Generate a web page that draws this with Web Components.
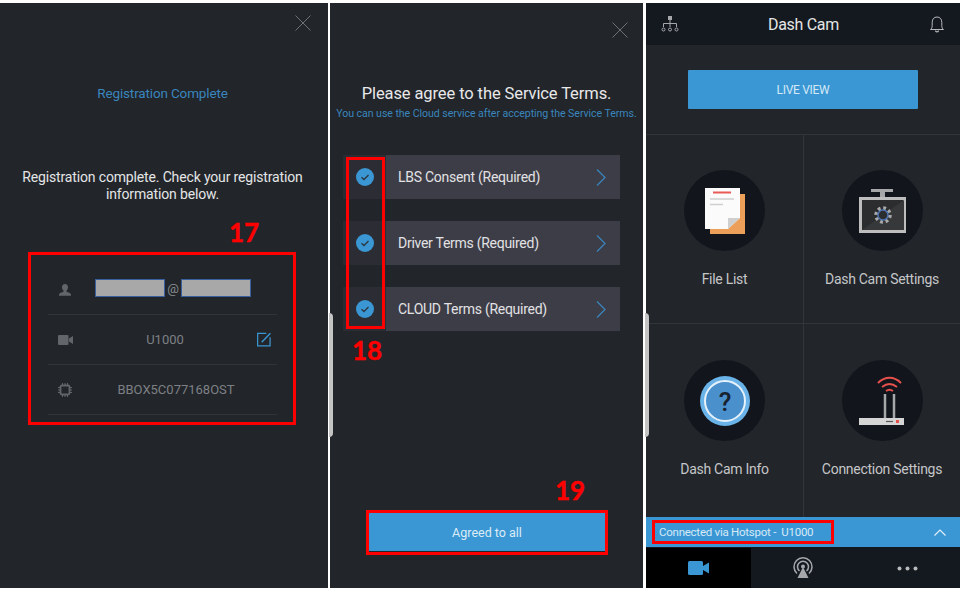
<!DOCTYPE html>
<html>
<head>
<meta charset="utf-8">
<title>Dash Cam</title>
<style>
  html, body { margin: 0; background: #fff; }
  body { width: 963px; height: 591px; overflow: hidden; position: relative; font-family: Roboto, "Liberation Sans", sans-serif; }
  .screens { display: flex; padding-top: 3px; height: 585px; }
  reg-screen { margin-right: 2px; }
  terms-screen { margin-right: 3px; }
</style>
</head>
<body>
<div class="screens">
  <reg-screen></reg-screen>
  <terms-screen></terms-screen>
  <dash-screen></dash-screen>
</div>
<mark-box style="left:28px;top:252px;width:268px;height:173px"></mark-box>
<mark-box style="left:346px;top:157px;width:39px;height:172px"></mark-box>
<mark-box style="left:366px;top:510px;width:242px;height:45px"></mark-box>
<mark-box style="left:652px;top:520px;width:182px;height:24px"></mark-box>
<mark-num style="left:229px;top:216px">17</mark-num>
<mark-num style="left:352px;top:334px">18</mark-num>
<mark-num style="left:555px;top:474px">19</mark-num>
<side-grip style="left:329px"></side-grip>
<side-grip style="left:645px"></side-grip>

<script>
const CLOSE_ICON = /* html */ `<svg width="16" height="16" viewBox="0 0 16 16"><path d="M.5.5l15 15M15.500.5l-15 15" stroke="#6d7074" fill="none"/></svg>`;

class MarkBox extends HTMLElement {
  constructor() {
    super();
    this.attachShadow({ mode: 'open' }).innerHTML = /* html */ `
    <style>:host { display: block; position: absolute; box-sizing: border-box; border: 3px solid #f00; }</style>`;
  }
}

class MarkNum extends HTMLElement {
  constructor() {
    super();
    this.attachShadow({ mode: 'open' }).innerHTML = /* html */ `
    <style>:host { display: block; position: absolute; font: 700 26px/32px Lato, sans-serif; color: #f00; -webkit-text-stroke: .4px #f00; }</style>
    <slot></slot>`;
  }
}

class SideGrip extends HTMLElement {
  constructor() {
    super();
    this.attachShadow({ mode: 'open' }).innerHTML = /* html */ `
    <style>:host { display: block; position: absolute; top: 313px; width: 4px; height: 124px; background: #c4c4c4; border-radius: 0 4px 4px 0; }</style>`;
  }
}

class InfoRow extends HTMLElement {
  constructor() {
    super();
    this.attachShadow({ mode: 'open' }).innerHTML = /* html */ `
    <style>
      :host { display: flex; align-items: center; height: 49px; border-bottom: 1px solid #31343a; position: relative; color: #7d8084; font-size: 13px; }
      .ico { position: absolute; left: 10px; display: flex; }
      .txt { flex: 1; display: flex; justify-content: center; align-items: center; padding-left: 5px; }
      .act { position: absolute; right: 6px; display: flex; }
    </style>
    <span class="ico"><slot name="icon"></slot></span>
    <span class="txt"><slot></slot></span>
    <span class="act"><slot name="action"></slot></span>`;
  }
}

class RegScreen extends HTMLElement {
  constructor() {
    super();
    this.attachShadow({ mode: 'open' }).innerHTML = /* html */ `
    <style>
      :host { display: flex; flex-direction: column; width: 328px; height: 585px; background: #22252a; box-sizing: border-box; position: relative; }
      .close { position: absolute; top: 12px; right: 17px; display: flex; }
      .title { margin-top: 82px; text-align: center; color: #3a86bd; font-size: 13.500px; letter-spacing: -.15px; line-height: 17px; padding-right: 3px; }
      .msg { margin-top: 67px; text-align: center; color: #e4e5e6; font-size: 14px; letter-spacing: -.15px; line-height: 17px; padding-right: 3px; }
      .list { margin: 62px 51px 0 48px; }
      .mask { display: inline-block; box-sizing: border-box; width: 70px; height: 18px; background: #a8a8a8; border: 1px solid #3a5f9e; }
      .at { padding: 0 2px; }
      .email { display: flex; align-items: center; margin: -3px 0 0 16px; color: #8a8d90; font-size: 13px; }
      .serial { margin-left: 22px; }
    </style>
    <div class="close">${CLOSE_ICON}</div>
    <div class="title">Registration Complete</div>
    <div class="msg">Registration complete. Check your registration<br>information below.</div>
    <div class="list">
      <info-row>
        <svg slot="icon" width="14" height="14" viewBox="0 0 14 14"><path d="M7 1c1.900 0 3 1.400 3 3.300 0 1.500-.7 2.700-1.500 3.300v1.100c1.700.5 4.500 1.300 4.500 3.100v1H1v-1c0-1.800 2.800-2.600 4.500-3.100V7.600C4.700 7 4 5.800 4 4.300 4 2.400 5.100 1 7 1z" fill="#62656a"/></svg>
        <span class="email"><span class="mask"></span><span class="at">@</span><span class="mask"></span></span>
      </info-row>
      <info-row>
        <svg slot="icon" width="15" height="12" viewBox="0 0 15 12"><path d="M1 1h8.500a1 1 0 0 1 1 1v8a1 1 0 0 1-1 1H1a1 1 0 0 1-1-1V2a1 1 0 0 1 1-1zM11 4.500L15 2v8l-4-2.500z" fill="#62656a"/></svg>
        U1000
        <svg slot="action" width="14" height="15" viewBox="0 0 15 15" fill="none" stroke="#3a97d4" stroke-width="1.300"><path d="M10 1H.7v13.300H14V5"/><path d="M5 10.500L14.300.7" stroke-width="1.500"/></svg>
      </info-row>
      <info-row>
        <svg slot="icon" width="14" height="14" viewBox="0 0 14 14"><rect x="2.500" y="2.500" width="9" height="9" rx="1.500" fill="none" stroke="#62656a" stroke-width="1.800"/><path d="M4.500 0v2M7 0v2M9.500 0v2M4.500 12v2M7 12v2M9.500 12v2M0 4.500h2M0 7h2M0 9.500h2M12 4.500h2M12 7h2M12 9.500h2" stroke="#62656a"/></svg>
        <span class="serial">BBOX5C077168OST</span>
      </info-row>
    </div>`;
  }
}

class TermsRow extends HTMLElement {
  constructor() {
    super();
    this.attachShadow({ mode: 'open' }).innerHTML = /* html */ `
    <style>
      :host { display: flex; align-items: stretch; height: 44px; background: #3d3d47; color: #e2e2e4; font-size: 14px; letter-spacing: -.27px; }
      .chk { width: 43px; background: #2c2d34; display: flex; align-items: center; justify-content: center; }
      .lbl { flex: 1; display: flex; align-items: center; padding-left: 12px; }
      .arr { display: flex; align-items: center; padding-right: 14px; }
    </style>
    <div class="chk"><svg width="18" height="18" viewBox="0 0 18 18"><circle cx="9" cy="9" r="9" fill="#3a97d4"/><path d="M5.500 9.200l2.500 2.300 4.500-4.500" fill="none" stroke="#2c3540" stroke-width="1.300"/></svg></div>
    <div class="lbl"><slot></slot></div>
    <div class="arr"><svg width="10" height="17" viewBox="0 0 10 17"><path d="M1 .5l8 8-8 8" fill="none" stroke="#3a86bd" stroke-width="1.200"/></svg></div>`;
  }
}

class TermsScreen extends HTMLElement {
  constructor() {
    super();
    this.attachShadow({ mode: 'open' }).innerHTML = /* html */ `
    <style>
      :host { display: flex; flex-direction: column; width: 313px; height: 585px; background: #22252a; position: relative; }
      .close { position: absolute; top: 19px; right: 15px; display: flex; }
      h1 { margin: 80px 0 0; font-size: 16.500px; letter-spacing: -.1px; line-height: 22px; font-weight: 400; text-align: center; color: #e8e8e9; }
      .sub { margin-top: 2px; font-size: 10.600px; letter-spacing: -.06px; line-height: 14px; text-align: center; color: #3a86bd; }
      .rows { display: flex; flex-direction: column; gap: 22px; margin: 34px 23px 0 13px; }
      .btn { margin: auto 38px 37px 39px; height: 38px; background: #3a97d4; color: #dcecf7; font-size: 12.500px; display: flex; align-items: center; justify-content: center; }
    </style>
    <div class="close">${CLOSE_ICON}</div>
    <h1>Please agree to the Service Terms.</h1>
    <div class="sub">You can use the Cloud service after accepting the Service Terms.</div>
    <div class="rows">
      <terms-row>LBS Consent (Required)</terms-row>
      <terms-row>Driver Terms (Required)</terms-row>
      <terms-row>CLOUD Terms (Required)</terms-row>
    </div>
    <div class="btn">Agreed to all</div>`;
  }
}

class DashTile extends HTMLElement {
  constructor() {
    super();
    this.attachShadow({ mode: 'open' }).innerHTML = /* html */ `
    <style>
      :host { display: flex; flex-direction: column; align-items: center; box-sizing: border-box; padding-top: 36px; color: #c5c6c8; font-size: 14px; letter-spacing: -.28px; line-height: 18px; }
      .disc { width: 81px; height: 81px; border-radius: 50%; background: #12161c; display: flex; align-items: center; justify-content: center; margin-bottom: 19px; }
    </style>
    <div class="disc"><slot name="icon"></slot></div>
    <slot></slot>`;
  }
}

class DashScreen extends HTMLElement {
  constructor() {
    super();
    this.attachShadow({ mode: 'open' }).innerHTML = /* html */ `
    <style>
      :host { display: flex; flex-direction: column; width: 314px; height: 585px; background: #22252a; }
      header { height: 42px; background: #141920; display: flex; align-items: center; justify-content: space-between; padding: 0 16px 0 15px; color: #e4e5e6; font-size: 16px; letter-spacing: -.3px; flex: none; }
      header span { margin-right: 2px; }
      .live { flex: none; margin: 25px 42px 25px; height: 39px; background: #3a97d4; border-radius: 1px; color: #d5e8f5; font-size: 12px; letter-spacing: -.3px; display: flex; align-items: center; justify-content: center; }
      .grid { flex: 1; display: grid; grid-template-columns: 158px 156px; grid-template-rows: 189px 193px; border-top: 1px solid #32353a; }
      .grid > :nth-child(odd) { border-right: 1px solid #32353a; }
      .grid > :nth-child(-n+2) { border-bottom: 1px solid #32353a; padding-top: 35px; }
      .status { flex: none; height: 30px; background: #3a97d4; color: #d7e9f6; font-size: 11.500px; letter-spacing: -.25px; display: flex; align-items: center; justify-content: space-between; padding: 0 14px 0 13px; }
      .gap { flex: none; height: 1px; background: #141920; }
      nav { flex: none; height: 40px; display: flex; background: #141920; }
      nav div { flex: 1; display: flex; align-items: center; justify-content: center; }
      nav div:first-child { background: #000; }
    </style>
    <header>
      <svg width="18" height="16" viewBox="0 0 18 16" fill="none" stroke="#a5a7aa"><rect x="7" y="0" width="4" height="4" fill="#a5a7aa" stroke="none"/><path d="M9 4v7M2.500 11V7.500h13V11"/><circle cx="2.500" cy="13.500" r="1.500"/><circle cx="9" cy="13.500" r="1.500"/><circle cx="15.500" cy="13.500" r="1.500"/></svg>
      <span>Dash Cam</span>
      <svg width="14" height="17" viewBox="0 0 14 17" fill="none" stroke="#b8babc"><path d="M.5 13.500c1.200-1 1.700-2 1.700-4V6.500C2.200 3 4 1 7 1s4.800 2 4.800 5.500v3c0 2 .5 3 1.700 4z"/><path d="M5.500 14.500c0 1.700 3 1.700 3 0" stroke-width="1.200"/></svg>
    </header>
    <div class="live">LIVE VIEW</div>
    <div class="grid">
      <dash-tile>
        <svg slot="icon" width="40" height="46" viewBox="0 0 40 46"><rect x="5" y="6" width="35" height="40" fill="#ec9f59"/><path d="M0 0h35v30L23 41H0z" fill="#fbfbfb"/><path d="M23 41V30h12z" fill="#cfcfcf"/><path d="M8 4.500h18" stroke="#e85a55" stroke-width="2"/><path d="M5 11h24M5 16.500h13" stroke="#cfcfcf" stroke-width="1.500"/></svg>
        File List
      </dash-tile>
      <dash-tile>
        <svg slot="icon" width="47" height="44" viewBox="0 0 47 44"><path d="M12 0h22v3H26v6h-5V3h-9z" fill="#a5a7a8"/><rect x="1.500" y="9.500" width="44" height="33" fill="#2c2d2f" stroke="#bdbdbd" stroke-width="3"/><path d="M3 41L45 11v30z" fill="#37383a"/><circle cx="24" cy="26" r="7" fill="none" stroke="#a9aaac" stroke-width="3.500" stroke-dasharray="2.800 2.700"/><circle cx="24" cy="26" r="5" fill="#2c2d2f" stroke="#4d74b5" stroke-width="1.500"/></svg>
        Dash Cam Settings
      </dash-tile>
      <dash-tile>
        <svg slot="icon" width="50" height="50" viewBox="0 0 50 50"><circle cx="25" cy="25" r="25" fill="#6ab3e8"/><circle cx="25" cy="25" r="20" fill="#4a90cc" stroke="#e6f1f9" stroke-width="2"/><text x="25" y="35" font-family="Roboto, sans-serif" font-size="26" font-weight="500" fill="#18222e" text-anchor="middle">?</text></svg>
        Dash Cam Info
      </dash-tile>
      <dash-tile>
        <svg slot="icon" width="46" height="49" viewBox="0 0 46 49"><g fill="none" stroke="#e8504c" stroke-width="2"><path d="M19 7c7-7 16-7 23 0"/><path d="M23 11c5-4 10-4 15 0"/><path d="M27 15c2-1.500 5-1.500 7 0"/></g><path d="M26 18v24M35 18v24" stroke="#a5a7a8" stroke-width="2.500"/><rect x="0" y="42" width="45" height="7" fill="#d5d5d5"/><path d="M27 45.500h7" stroke="#555" stroke-width="1.200"/><rect x="37" y="44" width="3" height="3" fill="#e8504c"/></svg>
        Connection Settings
      </dash-tile>
    </div>
    <div class="status">
      <span>Connected via Hotspot -&nbsp; U1000</span>
      <svg width="12" height="7" viewBox="0 0 12 7"><path d="M.5 6.500L6 1l5.500 5.500" fill="none" stroke="#e2eff8" stroke-width="1.200"/></svg>
    </div>
    <div class="gap"></div>
    <nav>
      <div><svg width="21" height="14" viewBox="0 0 21 14" fill="#3a97d4"><rect width="15" height="14" rx="1.500"/><path d="M15 5l6-3.500v11L15 9z"/></svg></div>
      <div><svg width="20" height="22" viewBox="0 0 20 22" fill="none" stroke="#a5a7aa" stroke-width="1.500"><path d="M4 16.500a9 9 0 1 1 12 0"/><path d="M6.500 14a5.500 5.500 0 1 1 7 0"/><circle cx="10" cy="9.500" r="2" fill="#a5a7aa" stroke="none"/><path d="M10 10L4.500 21h11z" fill="#a5a7aa" stroke="none"/></svg></div>
      <div><svg width="21" height="5" viewBox="0 0 21 5" fill="#b8babc"><circle cx="2.500" cy="2.500" r="2"/><circle cx="10.500" cy="2.500" r="2"/><circle cx="18.500" cy="2.500" r="2"/></svg></div>
    </nav>`;
  }
}

customElements.define('mark-box', MarkBox);
customElements.define('mark-num', MarkNum);
customElements.define('side-grip', SideGrip);
customElements.define('info-row', InfoRow);
customElements.define('reg-screen', RegScreen);
customElements.define('terms-row', TermsRow);
customElements.define('terms-screen', TermsScreen);
customElements.define('dash-tile', DashTile);
customElements.define('dash-screen', DashScreen);
</script>
</body>
</html>
